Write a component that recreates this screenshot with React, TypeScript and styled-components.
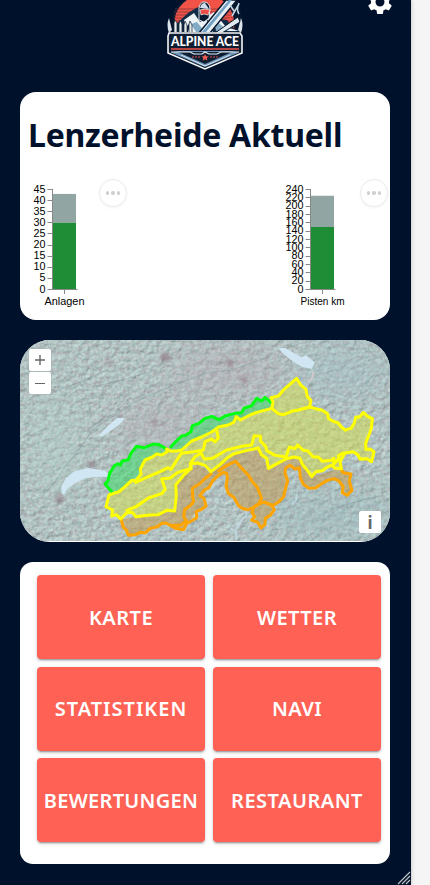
import React from "react";
import styled, { createGlobalStyle } from "styled-components";
import { MdSettings } from "react-icons/md";

const GlobalStyle = createGlobalStyle`
  * { box-sizing: border-box; }
  body { margin: 0; background: #f5f5f5; font-family: "Noto Sans", sans-serif; overflow: hidden; }
`;

const Frame = styled.main`
  position: relative;
  width: 411px;
  height: 885px;
  padding: 0 21px 0 20px;
  background: #00112b;
  box-shadow: 0 0 4px rgba(0, 0, 0, 0.25);
  overflow: hidden;
  display: flex;
  flex-direction: column;
`;

const Header = styled.header`
  display: grid;
  grid-template-columns: 1fr 82px 1fr;
  height: 92px;
  flex: none;
`;

const Logo = styled.svg`
  grid-column: 2;
  width: 82px;
  height: 72px;
`;

const SettingsButton = styled.button`
  justify-self: end;
  width: 30px;
  height: 30px;
  margin: -13px -5px 0 0;
  padding: 0;
  border: 0;
  background: none;
  color: #fff;
  font-size: 30px;
  line-height: 0;
`;

const Card = styled.section`
  flex: none;
  background: #fff;
  border-radius: 16px;
`;

const StatusCard = styled(Card)`
  height: 228px;
  margin-bottom: 20px;
  overflow: hidden;
`;

const Title = styled.h1`
  margin: 0;
  padding: 22px 0 0 8px;
  height: 87px;
  color: #00112b;
  font-size: 32px;
  line-height: 42px;
  font-weight: 700;
  letter-spacing: -0.25px;
  white-space: nowrap;
`;

const Charts = styled.div`
  display: flex;
  justify-content: space-between;
  padding-right: 2px;
`;

const ChartBox = styled.div<{ $width: number }>`
  display: flex;
  justify-content: space-between;
  width: ${(p) => p.$width}px;
  height: 135px;
`;

const ChartSvg = styled.svg`
  display: block;
  flex: none;
  font-family: "Liberation Sans", sans-serif;
  font-size: 10px;
`;

const MoreButton = styled.button`
  display: flex;
  align-items: center;
  justify-content: center;
  gap: 2px;
  width: 28px;
  height: 28px;
  padding: 0;
  border: 1px solid #ececec;
  border-radius: 50%;
  background: #fff;
  box-shadow: 0 1px 3px rgba(0, 0, 0, 0.05);
`;

const Dot = styled.i`
  width: 3.5px;
  height: 3.5px;
  border-radius: 50%;
  background: #d0d0d0;
`;

const MapCard = styled(Card)`
  position: relative;
  height: 202px;
  margin-bottom: 20px;
  border-radius: 30px;
  overflow: hidden;
`;

const MapSvg = styled.svg`
  display: block;
  width: 370px;
  height: 201px;
`;

const ZoomControls = styled.div`
  position: absolute;
  left: 8px;
  top: 8px;
  display: flex;
  flex-direction: column;
  gap: 1px;
  padding: 1px;
  border-radius: 3px;
  background: rgba(170, 180, 182, 0.65);
`;

const MapButton = styled.button`
  display: flex;
  align-items: center;
  justify-content: center;
  width: 22px;
  height: 22px;
  padding: 0;
  border: 0;
  border-radius: 2px;
  background: #fff;
  color: #666;
`;

const InfoButton = styled(MapButton)`
  position: absolute;
  right: 9px;
  bottom: 9px;
  font: bold 17px "Noto Sans", sans-serif;
`;

const MenuCard = styled(Card)`
  display: grid;
  grid-template-columns: 168px 168px;
  grid-auto-rows: 84px;
  gap: 7.5px 8px;
  height: 302px;
  padding: 13px 9px 0 17px;
  border-radius: 13px;
`;

const MenuButton = styled.button<{ $tracking: number }>`
  padding: 0;
  border: 0;
  border-radius: 4px;
  background: #ff6155;
  color: #fff;
  box-shadow: 0 3px 1px -2px rgba(0, 0, 0, 0.2), 0 2px 2px rgba(0, 0, 0, 0.14), 0 1px 5px rgba(0, 0, 0, 0.12);
  font: 600 20px "Noto Sans", sans-serif;
  letter-spacing: ${(p) => p.$tracking}px;
  white-space: nowrap;
`;

const ResizeGrip = styled.svg`
  position: absolute;
  right: 0;
  bottom: 0;
`;

type ChartProps = {
  label: string;
  labelWidth: number;
  max: number;
  step: number;
  open: number;
  total: number;
  axisX: number;
  width: number;
};

function BarChart({ label, labelWidth, max, step, open, total, axisX, width }: ChartProps) {
  const y = (v: number) => 110.5 - (v / max) * 100;
  const ticks = Array.from({ length: max / step + 1 }, (_, i) => i * step);
  return (
    <ChartBox $width={width}>
      <ChartSvg width="78" height="135">
        <rect x={axisX + 0.5} y={y(total)} width="23" height={y(open) - y(total)} fill="#91a6a3" />
        <rect x={axisX + 0.5} y={y(open)} width="23" height={y(0) - y(open)} fill="#1e8d35" />
        <path d={`M${axisX} 10V111M${axisX} 110.5h25M${axisX + 12} 111v4`} stroke="#888" />
        {ticks.map((t) => (
          <g key={t}>
            <path d={`M${axisX - 5} ${Math.round(y(t) - 0.5) + 0.5}h5`} stroke="#888" />
            <text
              x={axisX - 7}
              y={Math.round(y(t) + 3)}
              textAnchor="end"
              textLength={String(t).length * 6}
              lengthAdjust="spacingAndGlyphs"
            >
              {t}
            </text>
          </g>
        ))}
        <text x={axisX + 12} y="126" textAnchor="middle" textLength={labelWidth} lengthAdjust="spacingAndGlyphs">
          {label}
        </text>
      </ChartSvg>
      <MoreButton aria-label="Mehr">
        <Dot />
        <Dot />
        <Dot />
      </MoreButton>
    </ChartBox>
  );
}

const greenWest =
  "M290 470L270 447L278 440L284 415L298 392L308 386L316 390L322 378L340 374L348 355L364 334L388 338L412 328L430 328L455 342";
const greenEast =
  "M468 335L484 318L500 303L512 301L528 290L532 272L550 266L570 250L590 244L612 254L630 243L660 235L680 233L688 219L698 216L710 212L725 190L740 198L750 187L768 202";
const yellowNorth =
  "M312 470L330 455L350 436L362 437L378 418L376 402L390 375L412 366L425 357L440 360L457 350L455 342L470 349L488 347L500 345L530 318L560 306L590 291L612 275L640 270L656 262L664 245L676 255L705 240L725 232L770 220";
const yellowEast =
  "M770 220L774 202L768 188L790 183L806 164L828 145L845 130L857 150L873 163L877 185L888 196L884 216L902 221L920 225L938 236L940 250L953 258L970 264L978 275L990 285L1008 280L1018 264L1022 247L1035 245L1045 232L1058 244L1072 251L1069 280L1060 305L1052 325L1053 343L1065 342L1077 350L1070 380L1056 371L1035 373L1029 360L1014 350L990 354L975 380L979 401L960 399";
const yellowSouth =
  "M960 399L948 391L936 397L922 407L903 410L890 425L880 410L862 388L855 370L837 366L815 371L792 383L760 400L755 370L740 360L730 339L706 344L682 350L655 357L635 370L616 388L588 410L570 391L548 384L530 386L521 407L506 420L496 433L482 450L484 480L479 528L455 526L430 539L405 540L363 545L352 532L336 533L317 552L304 539L290 543L293 525L273 515L282 480L312 470";
const orangeWest =
  "M318 552L325 577L334 585L340 601L362 599L375 592L391 594L405 581L428 575L440 565L452 564L468 572L480 571L497 571L514 557L506 545L509 524L527 511L536 499L533 485L532 460L554 446L571 430L588 416";
const orangeValley =
  "M468 572L481 580L506 584L514 566L529 558L545 548L544 529L558 524L573 513L567 490L555 482L568 465L582 458L592 439L611 420L625 412L635 415L637 431L633 454L640 475L657 488L671 512L684 521L699 524L716 517L730 508L740 490L727 457L712 440L700 420L681 401L662 379L646 386L629 395L611 408";
const orangeEast =
  "M716 517L711 533L719 545L710 555L728 562L738 579L750 568L751 550L766 541L778 524L770 510L746 501L730 508L716 517M771 513L792 500L806 485L813 455L818 437L810 414L812 400L825 391L840 402L853 398L856 428L865 448L882 460L901 459L920 446L938 436L956 431L971 437L984 455L982 473L997 481L1011 466L1003 438L1008 417L984 413L977 400";

function AlpineMap() {
  return (
    <MapSvg viewBox="15 15 1110 603" preserveAspectRatio="none">
      <defs>
        <filter id="relief" x="0" y="0" width="100%" height="100%" colorInterpolationFilters="sRGB">
          <feTurbulence type="fractalNoise" baseFrequency="0.045 0.06" numOctaves="5" seed="8" result="noise" />
          <feDiffuseLighting in="noise" surfaceScale="3" diffuseConstant="1.08" lightingColor="#b6cdcc">
            <feDistantLight azimuth="225" elevation="62" />
          </feDiffuseLighting>
        </filter>
        <filter id="tint" x="0" y="0" width="100%" height="100%" colorInterpolationFilters="sRGB">
          <feTurbulence type="fractalNoise" baseFrequency="0.08" numOctaves="5" seed="23" />
          <feColorMatrix values="0 0 0 0 .7 0 0 0 0 .61 0 0 0 0 .65 5 0 0 0 -2.3" />
        </filter>
        <filter id="snow" x="0" y="0" width="100%" height="100%" colorInterpolationFilters="sRGB">
          <feTurbulence type="fractalNoise" baseFrequency="0.11" numOctaves="4" seed="4" />
          <feColorMatrix values="0 0 0 0 .86 0 0 0 0 .9 0 0 0 0 .86 0 6 0 0 -3" />
        </filter>
        <filter id="soft" x="-100%" y="-100%" width="300%" height="300%">
          <feGaussianBlur stdDeviation="7" />
        </filter>
        <filter id="wide" x="-50%" y="-50%" width="200%" height="200%">
          <feGaussianBlur stdDeviation="45" />
        </filter>
      </defs>
      <rect x="15" y="15" width="1110" height="603" filter="url(#relief)" />
      <rect x="15" y="15" width="1110" height="603" filter="url(#tint)" opacity=".36" />
      <rect x="15" y="15" width="1110" height="603" filter="url(#snow)" opacity=".36" />
      <g filter="url(#wide)" opacity=".4">
        <ellipse cx="430" cy="270" rx="140" ry="70" fill="#b8a9b2" />
        <ellipse cx="640" cy="110" rx="180" ry="80" fill="#b8a9b2" />
        <ellipse cx="980" cy="110" rx="150" ry="70" fill="#9fbcc5" />
        <ellipse cx="960" cy="540" rx="200" ry="70" fill="#96b9bd" />
        <ellipse cx="120" cy="330" rx="70" ry="160" fill="#b3d2c9" />
      </g>
      <g fill="none" stroke="#78939b" strokeWidth="3" opacity=".4">
        <path d="M80 485L122 438L150 395L189 350L228 290L289 242L350 205L432 169L493 144L580 112" />
        <path d="M105 175L200 139L280 103M260 150L340 130L420 106M186 349L241 277L350 210M585 113L650 105L760 66" />
        <path d="M775 510L820 495L850 460M310 612L390 578M910 570L980 512L1090 483" />
      </g>
      <g fill="#886a78" opacity=".6" filter="url(#soft)">
        <circle cx="284" cy="82" r="8" />
        <circle cx="451" cy="67" r="14" />
        <circle cx="418" cy="260" r="8" />
        <circle cx="230" cy="389" r="12" />
        <circle cx="133" cy="492" r="13" />
        <circle cx="644" cy="82" r="10" />
        <circle cx="686" cy="133" r="9" />
      </g>
      <g fill="#d1e6f3">
        <path d="M140 474L139 455L152 430L180 408L219 399L270 407L293 426L250 425L211 430L178 446L157 461L147 480Z" />
        <path d="M249 303L278 274L307 248L331 250L312 269L286 288L262 304Z" />
        <path d="M790 38L811 39L840 56L860 66L873 61L899 82L890 102L860 95L827 74L802 53Z" />
      </g>
      <path
        d="M645 580L662 587L666 612M663 583L682 551L694 544L694 524M831 507L843 496L846 477"
        stroke="#c3dbe6"
        strokeWidth="6"
        fill="none"
        opacity=".8"
      />
      <path d="M895 110L893 128L879 142" stroke="#d4cdd0" strokeWidth="7" fill="none" opacity=".8" />
      <path d={`${greenWest}L440 360L412 366L390 375L376 402L378 418L350 436L312 470Z`} fill="#37dc63" fillOpacity=".52" />
      <path
        d={`${greenEast}L770 220L725 232L676 255L656 262L612 275L560 306L530 318L500 345L468 345Z`}
        fill="#37dc63"
        fillOpacity=".52"
      />
      <path d={`${yellowNorth}${yellowEast.replace("M", "L")}${yellowSouth.replace("M", "L")}Z`} fill="#d6e04a" fillOpacity=".5" />
      <path d={`${orangeWest}L548 384L506 420L482 450L479 528L363 545Z`} fill="#c49a4a" fillOpacity=".5" />
      <path d="M532 460L588 416L635 370L682 350L730 339L760 400L815 371L855 370L890 425L977 400L1008 417L1003 438L1011 466L997 481L984 455L956 431L901 459L865 448L853 398L825 391L812 400L818 437L806 485L771 513L778 524L738 579L711 533L671 512L633 454L635 415L592 439L555 482L573 513L544 529L506 584L468 572L514 557L509 524L536 499Z" fill="#c49a4a" fillOpacity=".5" />
      <g fill="none" strokeWidth="9" strokeLinejoin="round" strokeLinecap="round">
        <g stroke="#ffa500">
          <path d={orangeWest} />
          <path d={orangeValley} />
          <path d={orangeEast} />
        </g>
        <g stroke="#00ff13">
          <path d={greenWest} />
          <path d={greenEast} />
        </g>
        <g stroke="#ff0">
          <path d={yellowNorth} />
          <path d={yellowEast} />
          <path d={yellowSouth} />
          <path d="M362 442L400 425L435 410L459 398L468 403L485 376L499 355L535 350L565 345L570 320L590 312L600 321L610 309L605 285" />
          <path d="M336 526L363 515L400 489L440 476L451 463L440 432L466 429L487 413L512 405L529 401L526 385L540 365L558 354L568 372L592 370L635 345L680 334L710 330L718 302L737 304L736 318L752 334L755 347L780 361L813 366L823 336L840 341L848 330L865 346L879 348L894 365L910 366L922 379L948 376L957 370L956 388L972 370L970 362L985 354" />
          <path d="M770 220L790 236L806 239L830 229L850 225L884 216" />
        </g>
      </g>
    </MapSvg>
  );
}

function AlpineLogo() {
  return (
    <Logo viewBox="164 0 82 72" role="img" aria-label="Alpine Ace">
      <path d="M172 34C169 20 173 8 183 0H236Q246 14 238 34Z" fill="#06172e" />
      <path d="M169 33Q166 25 169 18L172 30M241 33Q244 25 241 18L238 30" fill="#dce4e9" />
      <path d="M175 25Q173 10 187 0H222Q236 10 234 31H177Z" fill="#f15347" />
      <path d="M175 9h60M174 12h60M174 15h60M174 18h60M175 21h60" stroke="#762e3b" strokeWidth=".7" />
      <path d="M173 27L188 13L198 7L213 18L227 20L237 32H175Z" fill="#122b46" />
      <path d="M184 20L194 13L200 22L206 19L213 32H188L191 22L186 27ZM205 18L214 12L226 27L239 31H219Z" fill="#eef3f5" />
      <path d="M197 22L205 32H196L191 24ZM214 19L228 31H216Z" fill="#82abc6" />
      <path d="M174 32v-9l1-3 2 3v9m2 0V24l1-4 2 4v8m2 0v-7l1-4 2 4v7m2 0v-8l1-3 2 4v7" fill="#e6ecec" stroke="#0a1a2c" strokeWidth=".7" />
      <path d="M199 20V8Q200 2 204 2Q209 2 210 8L209 18L204 22Z" fill="#0a1a30" stroke="#d8e4ea" />
      <path d="M200 8Q201 3 205 3L209 9Z" fill="#cedeea" />
      <path d="M200 10Q205 8 210 10L208 15L204 14L201 15Z" fill="#ed4d45" stroke="#eff3f4" strokeWidth=".7" />
      <path d="M199 33L226 0H237L210 33Z" fill="#e7eff4" stroke="#06172e" strokeWidth="1.5" />
      <path d="M202 32L229 0H232L206 32Z" fill="#6fa0c3" />
      <path d="M215 33L238 17L240 22L222 33Z" fill="#dfe9f0" stroke="#06172e" />
      <path d="M232 16L239 4M234 11L230 5M239 3Q236 10 239 14" fill="none" stroke="#c4d9e7" strokeWidth="1.5" />
      <circle cx="230" cy="19" r="1.3" fill="#f15347" />
      <path d="M169 33H240L242 36V53L205 69L168 53V36Z" fill="#101e33" stroke="#f5f6f6" strokeWidth="1.6" />
      <path d="M171 52.5L205 67L239 52.5L231 51H179Z" fill="#6c95b7" />
      <path d="M178 52L205 64L232 52Z" fill="#101e33" />
      <path d="M171 52H190L194 54H202L205 52L209 54H217L221 52H239" fill="none" stroke="#e5edf1" strokeWidth="1.2" />
      <path d="M181 55L205 66L230 55" fill="none" stroke="#d8e4ee" />
      <path d="M171 49H239" stroke="#b84442" strokeWidth="2.2" />
      <path d="M205 54l1.1 2.2 2.6.2-1.9 1.6.6 2.5-2.4-1.3-2.3 1.3.6-2.5-1.9-1.6 2.5-.2Z" fill="#f05a4b" />
      <path d="M192 57h8m10 0h8" stroke="#d94a44" strokeDasharray="2 1" />
      <text x="205" y="46" textAnchor="middle" textLength="68" lengthAdjust="spacingAndGlyphs" fill="#fff" fontFamily="Lato, sans-serif" fontSize="14" fontWeight="900">
        ALPINE ACE
      </text>
    </Logo>
  );
}

const menuItems = [
  { label: "KARTE", tracking: 0.45 },
  { label: "WETTER", tracking: 0.4 },
  { label: "STATISTIKEN", tracking: 1 },
  { label: "NAVI", tracking: 0.4 },
  { label: "BEWERTUNGEN", tracking: 0.3 },
  { label: "RESTAURANT", tracking: 0.5 },
];

export default function App() {
  return (
    <>
      <GlobalStyle />
      <Frame>
        <Header>
          <AlpineLogo />
          <SettingsButton aria-label="Einstellungen">
            <MdSettings />
          </SettingsButton>
        </Header>
        <StatusCard>
          <Title>Lenzerheide Aktuell</Title>
          <Charts>
            <BarChart label="Anlagen" labelWidth={40} max={45} step={5} open={30} total={43} axisX={32.5} width={107} />
            <BarChart label="Pisten km" labelWidth={44} max={240} step={20} open={150} total={225} axisX={30.5} width={108} />
          </Charts>
        </StatusCard>
        <MapCard>
          <AlpineMap />
          <ZoomControls>
            <MapButton aria-label="Vergrößern">
              <svg width="12" height="12">
                <path d="M1 6h10M6 1v10" stroke="currentColor" strokeWidth="1.4" />
              </svg>
            </MapButton>
            <MapButton aria-label="Verkleinern">
              <svg width="12" height="12">
                <path d="M1 6.5h10" stroke="currentColor" />
              </svg>
            </MapButton>
          </ZoomControls>
          <InfoButton>i</InfoButton>
        </MapCard>
        <MenuCard>
          {menuItems.map((item) => (
            <MenuButton key={item.label} $tracking={item.tracking}>
              {item.label}
            </MenuButton>
          ))}
        </MenuCard>
        <ResizeGrip width="14" height="15">
          <path d="M1 14L13 2M5 14L13 6M9 14L13 10" stroke="#bbc0c4" strokeWidth="1.2" />
        </ResizeGrip>
      </Frame>
    </>
  );
}
